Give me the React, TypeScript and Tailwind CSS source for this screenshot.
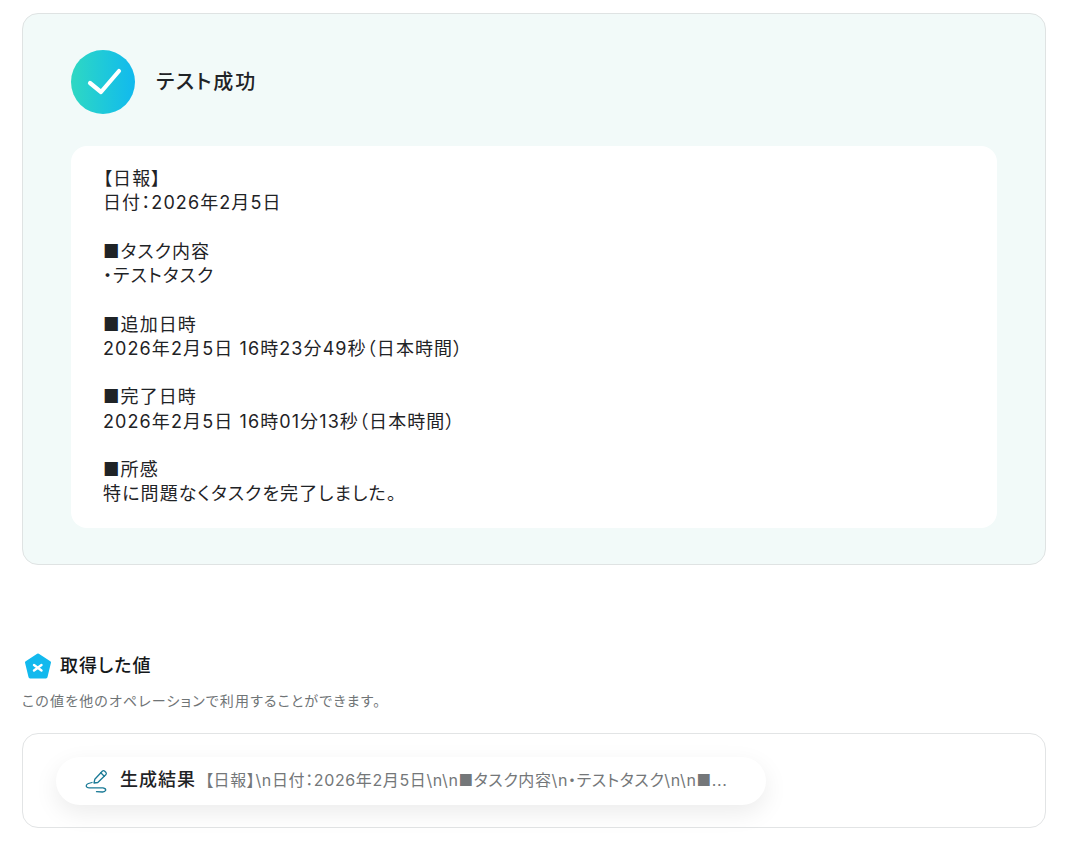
const lines = [
  "【日報】",
  "日付\uFF1A2026年2月5日",
  "",
  "■タスク内容",
  "・テストタスク",
  "",
  "■追加日時",
  "2026年2月5日 16時23分49秒\uFF08日本時間\uFF09",
  "",
  "■完了日時",
  "2026年2月5日 16時01分13秒\uFF08日本時間\uFF09",
  "",
  "■所感",
  "特に問題なくタスクを完了しました。",
];

const preview = "【日報】\\n日付\uFF1A2026年2月5日\\n\\n■タスク内容\\n・テストタスク\\n\\n■...";

export default function App() {
  return (
    <div className="bg-white h-[842px] overflow-hidden pl-[22px] pr-[20px] pt-[13px] text-[#1f2326] [font-family:Inter,'Noto_Sans_CJK_JP',sans-serif] [font-feature-settings:'palt']">
      <section className="h-[552px] rounded-2xl border border-[#dfe3e3] bg-[#f2faf9] px-[48px] pt-[36px]">
        <div className="flex items-center gap-[21px]">
          <div className="flex h-16 w-16 items-center justify-center rounded-full bg-gradient-to-r from-[#2fd8c2] to-[#12b9ee]">
            <svg width="40" height="32" viewBox="0 0 40 32" fill="none" stroke="white" strokeWidth="4.2" strokeLinecap="round" strokeLinejoin="round">
              <path d="M7 17 L18 26 L36 5" />
            </svg>
          </div>
          <h2 className="text-[20px] font-medium leading-8 tracking-[1.9px]">テスト成功</h2>
        </div>
        <div className="mt-8 h-[382px] rounded-2xl bg-white px-8 pt-[21px] text-[18px] leading-[24.25px] tracking-[1.1px]">
          {lines.map((l, i) => (
            <div key={i} className="h-[24.25px] whitespace-pre">{l}</div>
          ))}
        </div>
      </section>

      <div className="mt-[87px] flex items-center gap-[9px] pl-[3px]">
        <svg width="26" height="28" viewBox="0 0 26 28">
          <path d="M13 3 L24.5 10.5 L21 25 L5 25 L1.5 10.5 Z" fill="#12b9ee" stroke="#12b9ee" strokeWidth="3" strokeLinejoin="round" />
          <path d="M9 13 L16.5 18.5 M16.5 13 L9 18.5" stroke="white" strokeWidth="2.4" strokeLinecap="round" />
        </svg>
        <h3 className="text-[18px] font-medium leading-7 tracking-[1px] text-[#15181a]">取得した値</h3>
      </div>
      <p className="mt-[11px] text-[14px] leading-5 tracking-[1.15px] text-[#6f7476]">この値を他のオペレーションで利用することができます。</p>

      <section className="mt-[22px] h-[95px] rounded-2xl border border-[#e2e4e5] px-[33px] pt-[23px]">
        <div className="flex h-12 w-[710px] items-center rounded-full bg-white pl-[28px] shadow-[0_8px_24px_rgba(0,0,0,0.08)]">
          <svg width="24" height="24" viewBox="0 0 24 24" fill="none" stroke="#1a7a96" strokeWidth="1.3" strokeLinecap="round" strokeLinejoin="round" className="shrink-0">
            <path d="M10 14 L10.8 10.3 L18.5 2 Q19.5 1.2 20.5 2 L22 3.5 Q22.7 4.5 22 5.5 L13.8 13.5 Z" />
            <path d="M16.8 3.8 L20.3 7.2" />
            <path d="M8 13.5 L4.5 14.5 Q1.5 15.8 2.5 17.8 Q3 18.8 5 18.8 L19 18.8 Q22 19.3 21.7 21.3 Q21 23 18.5 23 L12.5 22.7" />
          </svg>
          <span className="mb-[3px] ml-[12px] text-[18px] font-medium tracking-[1px] text-[#1f2326]">生成結果</span>
          <span className="mb-[2px] ml-[9px] whitespace-pre text-[16px] tracking-[0.62px] text-[#747779]">{preview}</span>
        </div>
      </section>
    </div>
  );
}
